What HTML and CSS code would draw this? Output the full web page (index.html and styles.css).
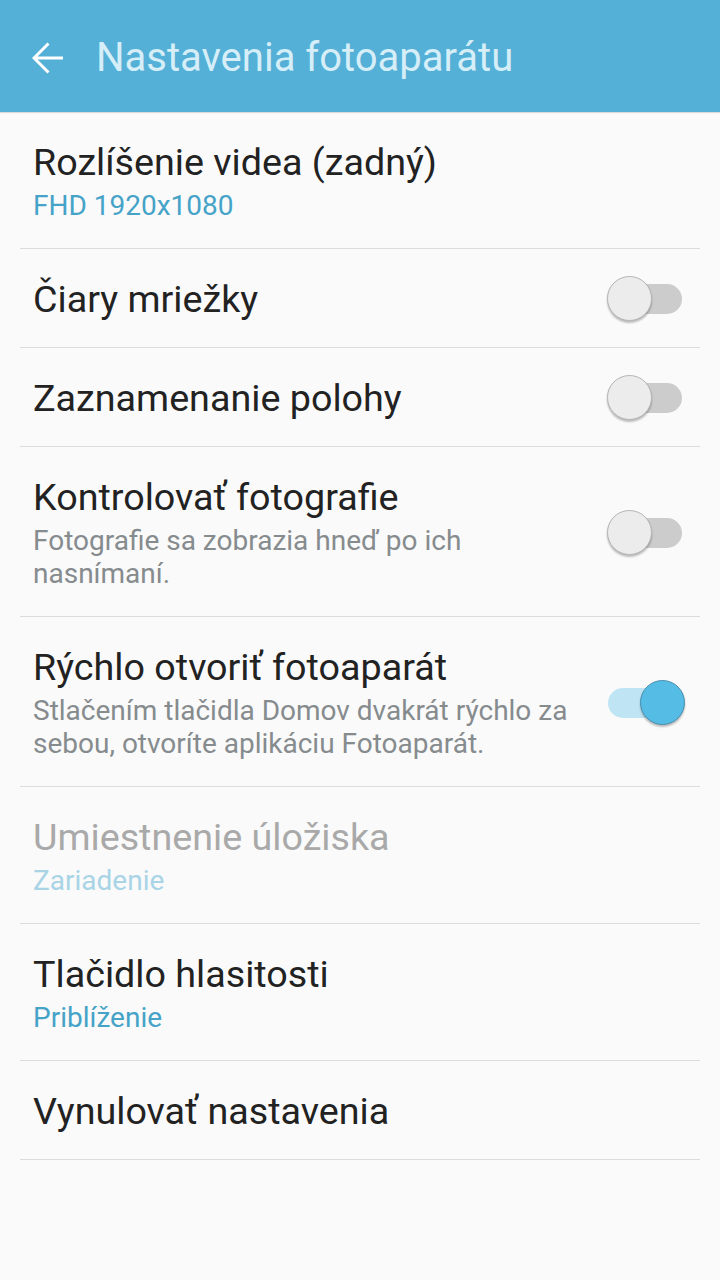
FILE: index.html
```html
<!DOCTYPE html>
<html lang="sk">

<head>
    <meta charset="UTF-8">
    <meta name="viewport" content="width=device-width, initial-scale=1.0">
    <title>Nastavenia fotoaparátu</title>
    <link rel="stylesheet" href="styles.css">
</head>

<body>
    <header class="app-bar">
        <svg class="back" width="32" height="32" viewBox="0 0 32 32">
            <path d="M31 16H2.5M16.5 1.5L2 16l14.5 14.5" fill="none" stroke="#fff" stroke-width="3" />
        </svg>
        <h1>Nastavenia fotoaparátu</h1>
    </header>

    <ul class="settings">
        <li class="row">
            <div class="text">
                <p class="title">Rozlíšenie videa (zadný)</p>
                <p class="value">FHD 1920x1080</p>
            </div>
        </li>
        <li class="row">
            <div class="text">
                <p class="title">Čiary mriežky</p>
            </div>
            <span class="switch"></span>
        </li>
        <li class="row">
            <div class="text">
                <p class="title">Zaznamenanie polohy</p>
            </div>
            <span class="switch"></span>
        </li>
        <li class="row">
            <div class="text">
                <p class="title">Kontrolovať fotografie</p>
                <p class="summary">Fotografie sa zobrazia hneď po ich nasnímaní.</p>
            </div>
            <span class="switch"></span>
        </li>
        <li class="row">
            <div class="text">
                <p class="title">Rýchlo otvoriť fotoaparát</p>
                <p class="summary">Stlačením tlačidla Domov dvakrát rýchlo za sebou, otvoríte aplikáciu Fotoaparát.</p>
            </div>
            <span class="switch on"></span>
        </li>
        <li class="row disabled">
            <div class="text">
                <p class="title">Umiestnenie úložiska</p>
                <p class="value">Zariadenie</p>
            </div>
        </li>
        <li class="row">
            <div class="text">
                <p class="title">Tlačidlo hlasitosti</p>
                <p class="value">Priblíženie</p>
            </div>
        </li>
        <li class="row">
            <div class="text">
                <p class="title">Vynulovať nastavenia</p>
            </div>
        </li>
    </ul>
</body>

</html>
```

FILE: styles.css
```css
body {
    margin: 0;
    background-color: #fafafa;
    font-family: Roboto, "Noto Sans", sans-serif;
    height: 1280px;
    overflow: hidden;
}

.app-bar {
    height: 112px;
    box-sizing: border-box;
    background-color: #54b0d6;
    display: flex;
    align-items: center;
    padding: 3px 0 0 32px;
    box-shadow: 0 1px 1px rgba(0, 0, 0, 0.12);
}

.app-bar h1 {
    margin: 0 0 0 32px;
    font-size: 40px;
    font-weight: 400;
    color: #d6eef8;
}

.settings {
    list-style: none;
    margin: 0;
    padding: 0 20px;
}

.row {
    display: flex;
    align-items: center;
    border-bottom: 1px solid #dcdcdc;
    padding: 28px 0 26px 13px;
}

.text {
    flex: 1;
}

.title {
    margin: 0;
    font-size: 37.7px;
    line-height: 44px;
    color: #222;
}

.value {
    margin: 5px 0 0;
    font-size: 28px;
    line-height: 33px;
    color: #46a3c8;
}

.summary {
    margin: 5px 0 0;
    font-size: 28px;
    line-height: 33px;
    color: #868b8e;
    padding-right: 20px;
}

.disabled .title {
    color: #a9a9a9;
}

.disabled .value {
    color: #a9d4e6;
}

/* toggle switch */
.switch {
    position: relative;
    width: 74px;
    height: 30px;
    border-radius: 15px;
    background-color: #cccccc;
    margin-right: 18px;
    flex-shrink: 0;
}

.switch::after {
    content: "";
    position: absolute;
    top: -8px;
    left: -1px;
    width: 45px;
    height: 45px;
    border-radius: 50%;
    background-color: #ececec;
    border: 1px solid #b5b5b5;
    box-sizing: border-box;
    box-shadow: 0 2px 2px rgba(0, 0, 0, 0.25);
}

.switch.on {
    background-color: #bfe5f4;
}

.switch.on::after {
    left: 32px;
    background-color: #55bde5;
    border-color: #4a8fb0;
}
```
